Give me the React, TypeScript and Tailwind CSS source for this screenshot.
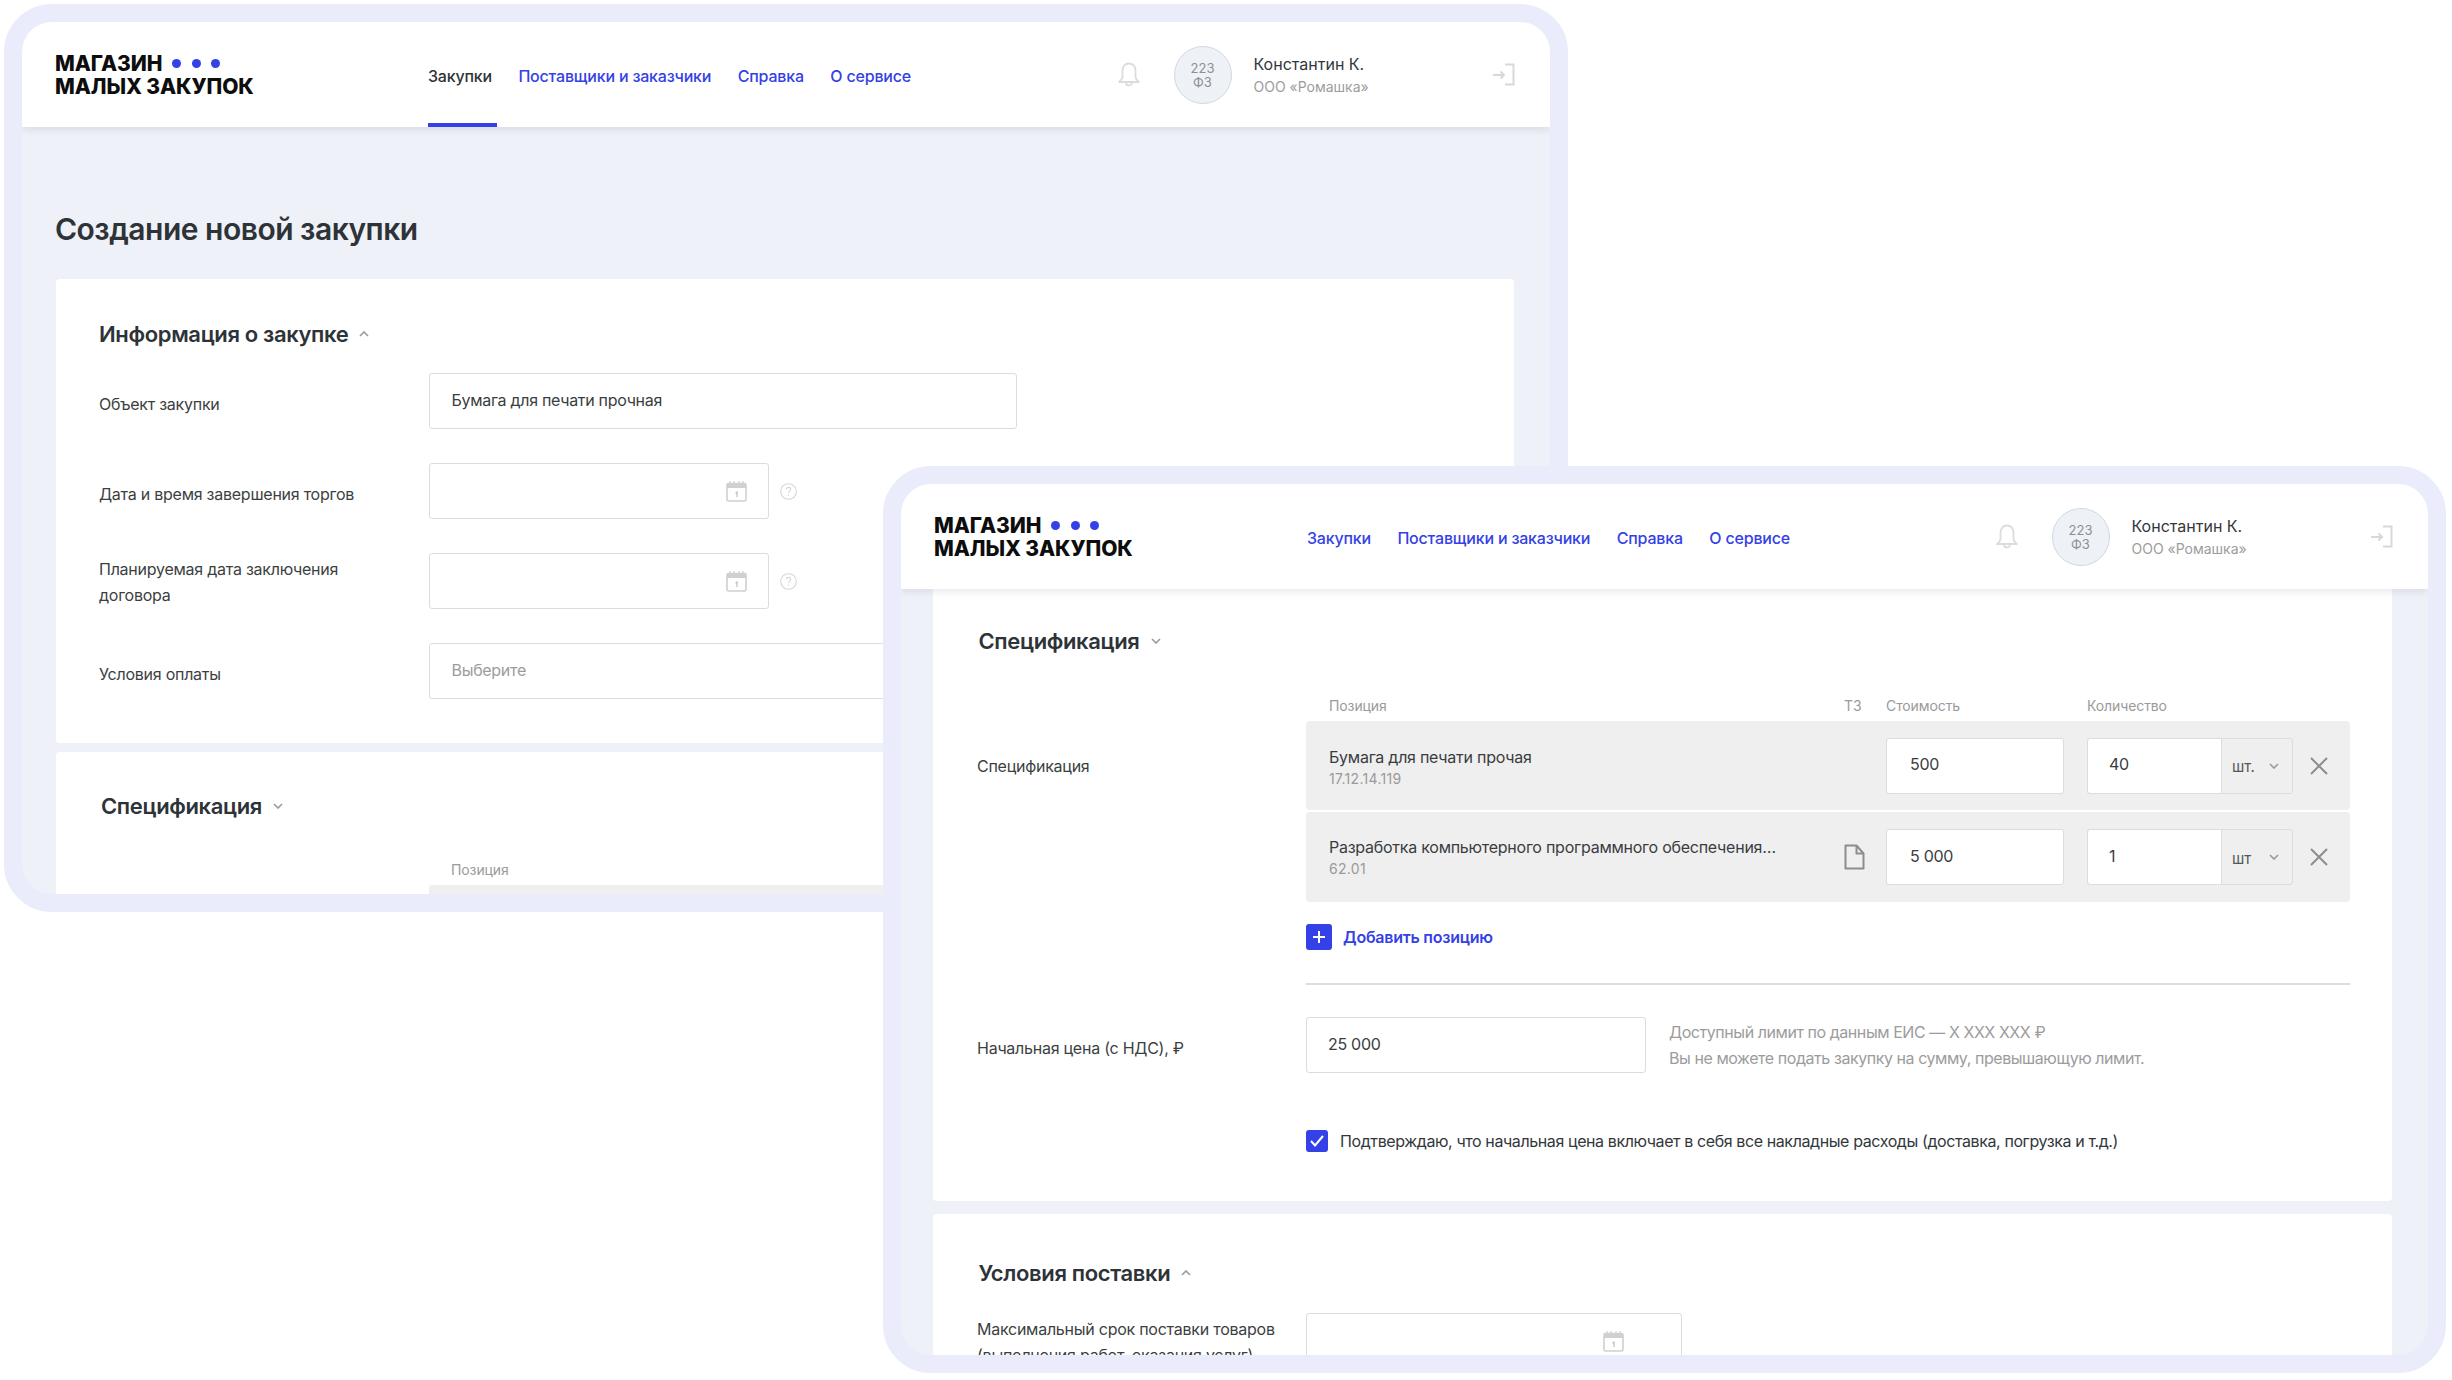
const LABEL = "text-[16px] tracking-[-0.25px] text-[#3c3f42]";

function Bell() {
  return (
    <svg width="22" height="26" viewBox="0 0 22 26" fill="none" stroke="#dcdcdc" strokeWidth="1.8" strokeLinejoin="round">
      <path d="M11 1.500c-4.200 0-6.500 3.200-6.500 7.500v5.500c0 2.200-1.200 3.800-3.500 5.500h20c-2.300-1.700-3.500-3.300-3.500-5.500V9c0-4.300-2.300-7.500-6.500-7.500z" />
      <path d="M8 20.500a3 3 0 0 0 6 0" />
    </svg>
  );
}

function Logout() {
  return (
    <svg width="22" height="23" viewBox="0 0 22 23" fill="none" stroke="#d8d8d8" strokeWidth="2">
      <path d="M0 12h11M7.500 8.500l3.500 3.500-3.500 3.500" />
      <path d="M12 1.500h8.500v20H12" />
    </svg>
  );
}

function Calendar() {
  return (
    <svg width="21" height="21" viewBox="0 0 21 21" fill="none">
      <path d="M4 0v3M8 0v3M13 0v3M17 0v3" stroke="#d0d0d0" strokeWidth="1.2" />
      <rect x="1" y="2.500" width="19" height="17.500" rx="1.500" stroke="#d0d0d0" strokeWidth="1.600" />
      <rect x="1" y="2.500" width="19" height="4.500" fill="#d0d0d0" />
      <path d="M9.500 12l1.500-1v5" stroke="#bdbdbd" strokeWidth="1.200" />
    </svg>
  );
}

function Help() {
  return (
    <svg width="17" height="17" viewBox="0 0 17 17" fill="none" stroke="#d6d6d6" strokeWidth="1.100" className="ml-[11px]">
      <circle cx="8.500" cy="8.500" r="7.800" />
      <path d="M6.300 6.500c0-1.300 1-2.100 2.200-2.100s2.200.8 2.200 2c0 1.700-2.200 1.700-2.200 3.600M8.500 11.800v1.200" />
    </svg>
  );
}

function Chevron({ up = false, color = "#9a9a9a" }: { up?: boolean; color?: string }) {
  return (
    <svg width="10" height="6" viewBox="0 0 10 6" fill="none" stroke={color} strokeWidth="1.600">
      <path d={up ? "M1 5l4-4 4 4" : "M1 1l4 4 4-4"} />
    </svg>
  );
}

function Logo() {
  return (
    <div className="w-[373px] pt-[1px] text-[21px] leading-[23px] font-extrabold tracking-[-0.1px] text-[#0d0d0d]">
      <div className="flex items-center">
        МАГАЗИН
        <span className="ml-[10px] flex gap-[10.500px]">
          <i className="size-[9px] rounded-full bg-[#3341e6]" />
          <i className="size-[9px] rounded-full bg-[#3341e6]" />
          <i className="size-[9px] rounded-full bg-[#3341e6]" />
        </span>
      </div>
      <div>МАЛЫХ ЗАКУПОК</div>
    </div>
  );
}

function Header({ active }: { active?: string }) {
  const links = ["Закупки", "Поставщики и заказчики", "Справка", "О сервисе"];
  return (
    <header className="relative z-10 flex h-[105px] shrink-0 items-center bg-white pr-[35.500px] pl-[33px] shadow-[0_2px_8px_rgba(40,50,80,0.12)]">
      <Logo />
      <nav className="flex h-full gap-[26.500px] pt-[3px] text-[16px] font-medium tracking-[-0.2px]">
        {links.map((l) => (
          <a key={l} className={`relative flex items-center ${l === active ? "text-[#2e3338]" : "text-[#3341e6]"}`}>
            {l}
            {l === active && <span className="absolute -right-[5px] bottom-0 left-0 h-[4px] bg-[#3341e6]" />}
          </a>
        ))}
      </nav>
      <div className="ml-auto flex items-center">
        <Bell />
        <div className="mr-[22px] ml-[34px] flex size-[58px] flex-col items-center justify-center rounded-full border border-[#cfd8e3] bg-[#eef2f7] text-[13px] leading-[14px] text-[#8b9097]">
          <span>223</span>
          <span>ФЗ</span>
        </div>
        <div className="w-[239px]">
          <div className="text-[16px] leading-[24px] text-[#33373b]">Константин К.</div>
          <div className="text-[14px] leading-[22px] text-[#9c9c9c]">ООО «Ромашка»</div>
        </div>
        <Logout />
      </div>
    </header>
  );
}

function Heading({ title, up }: { title: string; up?: boolean }) {
  return (
    <div className="flex h-[28px] items-center gap-[11px]">
      <h2 className="text-[22px] leading-[28px] font-semibold tracking-[-0.35px] text-[#2e3338]">{title}</h2>
      <Chevron up={up} />
    </div>
  );
}

function Box({ children, className = "" }: { children?: React.ReactNode; className?: string }) {
  return (
    <div className={`flex h-[56px] shrink-0 items-center rounded-[3px] border-[1.500px] border-[#dcdcdc] bg-white text-[16px] tracking-[-0.3px] text-[#3a3d40] ${className}`}>
      {children}
    </div>
  );
}

function Field({ label, children, tall }: { label: React.ReactNode; children: React.ReactNode; tall?: boolean }) {
  return (
    <div className="flex items-center">
      <div className={`w-[329.500px] shrink-0 leading-[26px] ${tall ? "pt-[1px]" : "pt-[5px]"} ${LABEL}`}>{label}</div>
      {children}
    </div>
  );
}

function SpecRow({ title, code, price, qty, unit, doc }: { title: string; code: string; price: string; qty: string; unit: string; doc?: boolean }) {
  return (
    <div className={`flex items-center rounded-[4px] bg-[#efefef] pr-[22px] pl-[23px] ${doc ? "h-[90px]" : "h-[89px]"}`}>
      <div className={`w-[515px] ${doc ? "-mt-[1px]" : "pt-[3px]"}`}>
        <div className="text-[16px] leading-[24px] tracking-[-0.25px] text-[#3a3d40]">{title}</div>
        <div className="text-[14px] leading-[20px] tracking-[0.3px] text-[#9a9a9a]">{code}</div>
      </div>
      <div className="w-[42px]">
        {doc && (
          <svg width="21" height="26" viewBox="0 0 21 26" fill="none" stroke="#8d8d8d" strokeWidth="2" strokeLinejoin="round">
            <path d="M1.500 1.500h11l7 8v15h-18z" />
            <path d="M12.500 1.500v8h7" />
          </svg>
        )}
      </div>
      <Box className="w-[178px] pb-[3px] pl-[23px]">{price}</Box>
      <div className="ml-[23px] flex h-[56px] w-[206px]">
        <Box className="w-[134px] rounded-r-none border-r-0 pb-[3px] pl-[21px]">{qty}</Box>
        <div className="flex flex-1 items-center justify-between rounded-r-[3px] border-[1.500px] border-[#dcdcdc] pt-[4px] pr-[13px] pl-[10px] text-[15px] text-[#55585b]">
          {unit}
          <span className="pb-[4px]">
            <Chevron />
          </span>
        </div>
      </div>
      <svg width="18" height="18" viewBox="0 0 18 18" fill="none" stroke="#8d8d8d" strokeWidth="2" className="ml-[17px]">
        <path d="M1 1l16 16M17 1L1 17" />
      </svg>
    </div>
  );
}

export default function App() {
  return (
    <div className="relative h-[1380px] w-[2452px] overflow-hidden bg-white font-['Inter',sans-serif]">
      {/* back window */}
      <div className="absolute top-[4px] left-[4px] flex h-[908px] w-[1564px] flex-col overflow-hidden rounded-[48px] border-[18px] border-[#eaecfb] bg-[#eef1f7]">
        <Header active="Закупки" />
        <div className="shrink-0 pr-[36px] pl-[34px]">
          <h1 className="mt-[82px] mb-[30px] -ml-px text-[30px] leading-[40px] font-semibold tracking-[-0.5px] text-[#2e3338]">Создание новой закупки</h1>
          <section className="rounded-[4px] bg-white pt-[41px] pb-[44px] pl-[43px]">
            <Heading title="Информация о закупке" up />
            <div className="mt-[25px] flex flex-col gap-[34px]">
              <Field label="Объект закупки">
                <Box className="w-[588px] pb-[3px] pl-[22px]">Бумага для печати прочная</Box>
              </Field>
              <Field label="Дата и время завершения торгов">
                <Box className="w-[340px] justify-end pr-[21px]">
                  <Calendar />
                </Box>
                <Help />
              </Field>
              <Field tall label={<>Планируемая дата заключения<br />договора</>}>
                <Box className="w-[340px] justify-end pr-[21px]">
                  <Calendar />
                </Box>
                <Help />
              </Field>
              <Field label="Условия оплаты">
                <Box className="w-[588px] pb-[3px] pl-[22px] text-[#9c9c9c]">Выберите</Box>
              </Field>
            </div>
          </section>
          <section className="mt-[9px] h-[200px] rounded-[4px] bg-white pt-[40px] pl-[45px]">
            <Heading title="Спецификация" />
            <div className="mt-[40px] pl-[350px] text-[14px] leading-[20px] tracking-[-0.1px] text-[#9a9a9a]">Позиция</div>
            <div className="mt-[5px] ml-[328px] h-[90px] rounded-[4px] bg-[#efefef]" />
          </section>
        </div>
      </div>

      {/* front window */}
      <div className="absolute top-[466px] left-[883px] flex h-[907px] w-[1563px] flex-col overflow-hidden rounded-[48px] border-[18px] border-[#eaecfb] bg-[#eef1f7]">
        <Header />
        <div className="shrink-0 pr-[36px] pl-[32px]">
          <section className="rounded-b-[4px] bg-white pt-[38px] pr-[43px] pb-[48px] pl-[44px]">
            <div className="ml-[1.500px]">
              <Heading title="Спецификация" />
            </div>
            <div className="mt-[41px] flex">
              <div className={`w-[329px] shrink-0 pt-[58px] leading-[24px] ${LABEL}`}>Спецификация</div>
              <div className="flex-1">
                <div className="mb-[5px] flex pl-[23px] text-[14px] leading-[20px] tracking-[-0.1px] text-[#9a9a9a]">
                  <span className="w-[515px]">Позиция</span>
                  <span className="w-[42px]">ТЗ</span>
                  <span className="w-[201px]">Стоимость</span>
                  <span>Количество</span>
                </div>
                <div className="flex flex-col gap-[2px]">
                  <SpecRow title="Бумага для печати прочая" code="17.12.14.119" price="500" qty="40" unit="шт." />
                  <SpecRow title="Разработка компьютерного программного обеспечения…" code="62.01" price="5 000" qty="1" unit="шт" doc />
                </div>
                <div className="mt-[22px] flex items-center gap-[11px]">
                  <span className="flex size-[26px] items-center justify-center rounded-[3px] bg-[#3341e6]">
                    <svg width="14" height="14" viewBox="0 0 14 14" stroke="#fff" strokeWidth="2">
                      <path d="M7 1v12M1 7h12" />
                    </svg>
                  </span>
                  <a className="text-[16px] font-semibold tracking-[-0.25px] text-[#3341e6]">Добавить позицию</a>
                </div>
                <div className="mt-[33px] h-[2px] bg-[#dedede]" />
              </div>
            </div>
            <div className="mt-[32px] flex items-center">
              <div className={`w-[329px] shrink-0 pt-[6px] leading-[24px] ${LABEL}`}>Начальная цена (с НДС), ₽</div>
              <Box className="w-[340px] pb-[3px] pl-[21px]">25 000</Box>
              <div className="ml-[23px] text-[16px] leading-[26px] tracking-[-0.44px] text-[#9c9c9c]">
                <div>Доступный лимит по данным ЕИС — X XXX XXX ₽</div>
                <div>Вы не можете подать закупку на сумму, превышающую лимит.</div>
              </div>
            </div>
            <div className="mt-[56px] ml-[329px] flex items-center gap-[12px]">
              <span className="flex size-[22px] items-center justify-center rounded-[3px] bg-[#3341e6]">
                <svg width="14" height="12" viewBox="0 0 14 12" fill="none" stroke="#fff" strokeWidth="2">
                  <path d="M1 6l4 4.500L13 1" />
                </svg>
              </span>
              <span className="text-[16px] tracking-[-0.4px] text-[#33373b]">Подтверждаю, что начальная цена включает в себя все накладные расходы (доставка, погрузка и т.д.)</span>
            </div>
          </section>
          <section className="mt-[13px] rounded-[4px] bg-white pt-[45px] pb-[40px] pl-[44px]">
            <div className="ml-[1.500px]">
              <Heading title="Условия поставки" up />
            </div>
            <div className="mt-[26px] flex">
              <div className={`w-[329px] shrink-0 pt-[3px] leading-[26px] ${LABEL}`}>
                Максимальный срок поставки товаров (выполнения работ, оказания услуг)
              </div>
              <Box className="w-[376px] justify-end pr-[57px]">
                <Calendar />
              </Box>
            </div>
          </section>
        </div>
      </div>
    </div>
  );
}
